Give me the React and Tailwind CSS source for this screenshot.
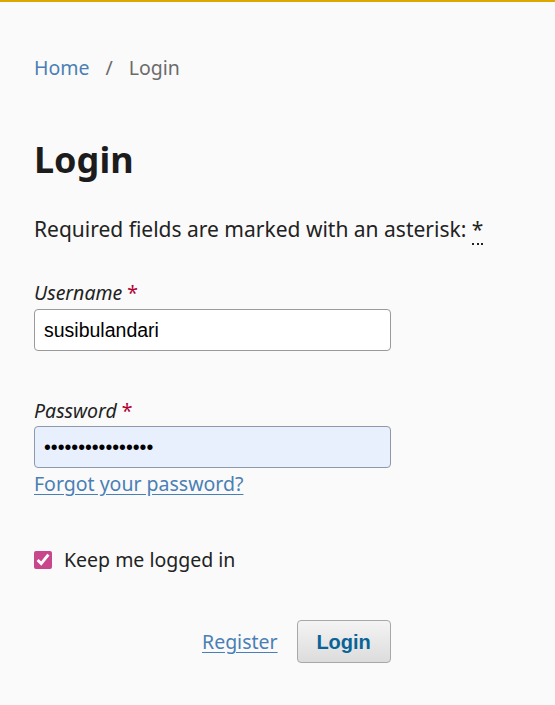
import { useState } from "react";

export default function App() {
  const [keep, setKeep] = useState(true);

  return (
    <main
      className="min-h-[705px] bg-[#fafafa] border-t-2 border-[#dba800] px-[34px] text-[#222]"
      style={{ fontFamily: '"Noto Sans", sans-serif' }}
    >
      {/* Breadcrumb */}
      <nav className="mt-[50px] h-[32px] leading-[32px] text-[19.5px] flex items-center">
        <a href="#" className="text-[#4a7fb5]">Home</a>
        <span className="mx-[16px] text-[#6b6b6b]">/</span>
        <span className="text-[#6b6b6b]">Login</span>
      </nav>

      <h1 className="mt-[52px] h-[48px] leading-[48px] text-[36px] font-bold text-[#1c1c1c]">
        Login
      </h1>

      <p className="mt-[31px] h-[28px] leading-[28px] text-[21px]">
        Required fields are marked with an asterisk:{" "}
        <abbr title="Required" className="no-underline border-b-2 border-dotted border-[#222]">
          *
        </abbr>
      </p>

      <form className="flex flex-col">
        <label className="mt-[36px] h-[28px] leading-[28px] text-[19.5px] italic">
          Username <span className="text-[#b10034] not-italic">*</span>
        </label>
        <input
          type="text"
          defaultValue="susibulandari"
          className="mt-[2px] w-[357px] h-[42px] px-[9px] rounded-[4px] border border-[#9a9a9a] bg-white text-[19.5px] text-black outline-none"
          style={{ fontFamily: '"Liberation Sans", Arial, sans-serif' }}
        />

        <label className="mt-[46px] h-[28px] leading-[28px] text-[19.5px] italic">
          Password <span className="text-[#b10034] not-italic">*</span>
        </label>
        <input
          type="password"
          defaultValue="susibulandari123"
          className="mt-[1px] w-[357px] h-[42px] px-[9px] rounded-[4px] border border-[#8e9aa8] bg-[#e8f0fe] text-[19.5px] text-black outline-none"
          style={{ fontFamily: '"Liberation Sans", Arial, sans-serif' }}
        />
        <a
          href="#"
          className="mt-[2px] h-[28px] leading-[28px] text-[19.5px] text-[#4a7fb5] underline underline-offset-[3px] self-start"
        >
          Forgot your password?
        </a>

        <label className="mt-[48px] h-[28px] flex items-center gap-[12px] text-[19.5px]">
          <input
            type="checkbox"
            checked={keep}
            onChange={(e) => setKeep(e.target.checked)}
            className="w-[18px] h-[18px] m-0 accent-[#c8478c]"
          />
          Keep me logged in
        </label>

        <div className="mt-[46px] flex items-center gap-[19px] pl-[168px]">
          <a href="#" className="text-[19.5px] text-[#4a7fb5] underline underline-offset-[3px]">
            Register
          </a>
          <button
            type="button"
            className="w-[94px] h-[43px] rounded-[4px] border border-[#a8a8a8] bg-gradient-to-b from-[#f4f4f4] to-[#dcdcdc] text-[20px] font-bold text-[#0a6396]"
            style={{ fontFamily: '"Liberation Sans", Arial, sans-serif' }}
          >
            Login
          </button>
        </div>
      </form>
    </main>
  );
}
